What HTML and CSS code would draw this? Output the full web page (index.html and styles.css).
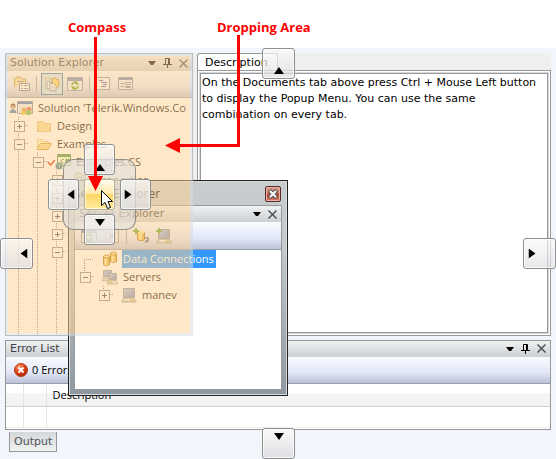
FILE: index.html
```html
<!DOCTYPE html>
<html lang="en">
<head>
<meta charset="utf-8">
<title>Docking</title>
<link rel="stylesheet" href="styles.css">
</head>
<body>
<svg class="defs" aria-hidden="true">
  <defs>
    <linearGradient id="gold" x1="0" x2="1"><stop offset="0" stop-color="#f3b52c"/><stop offset=".35" stop-color="#ffeaa0"/><stop offset="1" stop-color="#dc9410"/></linearGradient>
    <linearGradient id="screen" x1="0" y1="0" x2="1" y2="1"><stop offset="0" stop-color="#b4c6e4"/><stop offset="1" stop-color="#7587b8"/></linearGradient>
    <radialGradient id="red" cx=".35" cy=".25" r=".8"><stop offset="0" stop-color="#ff9a70"/><stop offset=".5" stop-color="#e04818"/><stop offset="1" stop-color="#a82408"/></radialGradient>
    <symbol id="drop" viewBox="0 0 8 4"><path d="M0 0h8L5 4H3z" fill="currentColor"/></symbol>
    <symbol id="pin" viewBox="0 0 9 10"><path d="M2.500 6V.5h4V6M5.500 1v5M0 6.500h9M4.500 7v3" fill="none" stroke="currentColor"/></symbol>
    <symbol id="close" viewBox="0 0 9 9"><path d="M.5.5l8 8M8.500.5l-8 8" fill="none" stroke="currentColor" stroke-width="1.400"/></symbol>
    <symbol id="folder" viewBox="0 0 16 16"><path d="M1.500 13.500v-10h5l1.500 2h6.500v8z" fill="#f6dc90" stroke="#b8902c" stroke-dasharray="1 1"/></symbol>
    <symbol id="folder-open" viewBox="0 0 16 16"><path d="M1.500 13V3.500h5l1.500 2h4.500V8" fill="#fff0b8" stroke="#b8902c" stroke-dasharray="1 1"/><path d="M1 13.500L4.500 7.500h11L12 13.500z" fill="#f6d987" stroke="#c49a36"/></symbol>
    <symbol id="db" viewBox="0 0 16 16"><path d="M8.500 2.500v8c0 1.500 6 1.500 6 0v-8z" fill="url(#gold)" stroke="#ad7610"/><ellipse cx="11.500" cy="2.500" rx="3" ry="1.500" fill="#ffe896" stroke="#ad7610"/><path d="M1.500 5.500v8c0 1.500 6 1.500 6 0v-8z" fill="url(#gold)" stroke="#ad7610"/><ellipse cx="4.500" cy="5.500" rx="3" ry="1.500" fill="#ffe896" stroke="#ad7610"/></symbol>
    <symbol id="pc" viewBox="0 0 16 16"><path d="M2.500 1.500h11v9h-11z" fill="url(#screen)" stroke="#8c93a0"/><path d="M3.500 11h9l2.500 2.500v1.500H1v-1.500z" fill="#d9d9d2" stroke="#85857c" stroke-width=".8"/><path d="M10 13.500h3" stroke="#d5a800" /><path d="M4 12.500h4" stroke="#fff"/></symbol>
    <symbol id="pcs" viewBox="0 0 16 16"><path d="M1.500 1.500h8v6h-8z" fill="url(#screen)" stroke="#8c93a0"/><path d="M1 9h6v3H0v-1z" fill="#d9d9d2" stroke="#85857c" stroke-width=".7"/><path d="M7.500 4.500h7v6h-7z" fill="url(#screen)" stroke="#8c93a0"/><path d="M7.500 11.500h7l1 2v1.500H5.500v-1.500z" fill="#e4e4da" stroke="#85857c" stroke-width=".7"/><path d="M7 13.500h3" stroke="#d5a800"/></symbol>
    <symbol id="refresh" viewBox="0 0 16 16"><path d="M.5 1.500h15v13H.5z" fill="#eef1f6" stroke="#8b96a8"/><path d="M1 2h14v3H1z" fill="#6f8cba"/><path d="M5 9a3 3 0 0 1 5-2M11 10a3 3 0 0 1-5 2" fill="none" stroke="#5a9c10" stroke-width="1.700"/><path d="M9 5l3.500 3.500H8zM7 14l-3.500-3.500H8z" fill="#5a9c10"/></symbol>
    <symbol id="props" viewBox="0 0 16 16"><path d="M.5 11V3h1l1-2h4l1 2h4v4" fill="#f7e0a0" stroke="#b79548"/><path d="M5.500 7.500h10v7h-10z" fill="#fff" stroke="#6f7c94"/><path d="M3 5.500h7M7 9.500h2m1 0h4M7 12.500h2m1 0h4" stroke="#7b879c"/></symbol>
    <symbol id="files" viewBox="0 0 18 18"><path d="M1.500 14V2.500h5V4H10" fill="none" stroke="#b8902c" stroke-dasharray="1 1"/><path d="M9.500 2.500h4l1 1.500h2v8h-7z" fill="#f8d46c" stroke="#b98b20"/><path d="M3.500 6.500h5v8h-5z" fill="#fff" stroke="#7785a0"/><path d="M6.500 8.500h4l3 3v5h-7z" fill="#fff" stroke="#6f7c94"/><path d="M8 11.500h2M8 13.500h4" stroke="#8c99b0"/></symbol>
    <symbol id="code" viewBox="0 0 16 16"><path d="M.5 1.500h13v12H.5z" fill="#f7f8fb" stroke="#8993a8"/><path d="M3 4.500h4M5 6.500h6M7 8.500h4M5 10.500h5" stroke="#5560b4"/></symbol>
    <symbol id="form" viewBox="0 0 16 16"><path d="M.5 1.500h14v12H.5z" fill="#eff1f6" stroke="#8390a6"/><path d="M1 2h13v2H1z" fill="#6f86b0"/><path d="M2.500 7.500H6M2.500 10.500H6M7.500 6.500h5v2h-5zM7.500 10.500h5v1h-5z" fill="#fff" stroke="#7d899e"/></symbol>
    <symbol id="solution" viewBox="0 0 16 16"><path d="M.5 1.500h15v12H.5z" fill="#e6eaf3" stroke="#7787a6"/><path d="M1 2h14v2H1z" fill="#4977bd"/><circle cx="7" cy="10" r="2.300" fill="#e88a2c"/><circle cx="6.500" cy="13" r="2.300" fill="#ecc423"/><circle cx="12" cy="9.500" r="2.500" fill="#d95648"/><circle cx="11.500" cy="12.500" r="2.800" fill="#7eb24c"/></symbol>
    <symbol id="user" viewBox="0 0 8 16"><circle cx="4" cy="6" r="2.500" fill="#5a412f"/><circle cx="4" cy="7" r="1.700" fill="#e7a777"/><path d="M.5 13c0-5 7-5 7 0z" fill="#4779ae"/></symbol>
    <symbol id="check" viewBox="0 0 8 16"><path d="M1 8l2.500 3L8 6" fill="none" stroke="#e02808" stroke-width="1.600"/></symbol>
    <symbol id="project" viewBox="0 0 16 16"><path d="M2.500.5h13v11h-13z" fill="#f8fff4" stroke="#4b8740"/><path d="M3 1h12v2H3z" fill="#469232"/><path d="M9 5.500a2 2 0 1 0 0 3.500M11.500 4.500v5M13.500 4.500v5M10 6h5M10 8h5" fill="none" stroke="#2f8c1e"/><circle cx="4" cy="12" r="3.500" fill="#407f96"/><path d="M2 10l3 1-1 3" stroke="#8cc29a" fill="none"/></symbol>
    <symbol id="plus" viewBox="0 0 6 6"><path d="M2 0h2v2h2v2H4v2H2V4H0V2h2z" fill="#6ca528"/></symbol>
    <symbol id="remove" viewBox="0 0 16 16"><path d="M1.500 1.500h13v13h-13z" fill="#eee" stroke="#999"/><path d="M5 5l6 6M11 5l-6 6" stroke="#888" stroke-width="1.500"/></symbol>
    <symbol id="arrow" viewBox="0 0 10 7"><path d="M5 0l5 7H0z" fill="#000"/></symbol>
  </defs>
</svg>

<main class="workspace">
  <div class="docks">
    <section class="panel solution">
      <header class="bar">
        <h2>Solution Explorer</h2>
        <button aria-label="Menu"><svg class="g-drop"><use href="#drop"/></svg></button>
        <button aria-label="Pin"><svg class="g-pin"><use href="#pin"/></svg></button>
        <button aria-label="Close"><svg class="g-close"><use href="#close"/></svg></button>
      </header>
      <div class="tools">
        <button aria-label="Properties"><svg><use href="#props"/></svg></button>
        <i class="sep"></i>
        <button class="pressed" aria-label="Show all files"><svg><use href="#files"/></svg></button>
        <button aria-label="Refresh"><svg><use href="#refresh"/></svg></button>
        <i class="sep"></i>
        <button aria-label="View code"><svg><use href="#code"/></svg></button>
        <button aria-label="View designer"><svg><use href="#form"/></svg></button>
      </div>
      <ul class="tree">
        <li><svg class="badge"><use href="#user"/></svg><svg class="icon"><use href="#solution"/></svg><span class="label">Solution 'Telerik.Windows.Co</span></li>
        <li><i class="guide node plus"></i><i class="badge"></i><svg class="icon"><use href="#folder"/></svg><span class="label">Design</span></li>
        <li><i class="guide node"></i><i class="badge"></i><svg class="icon"><use href="#folder-open"/></svg><span class="label">Examples</span></li>
        <li><i class="guide"></i><i class="guide node"></i><svg class="badge"><use href="#check"/></svg><svg class="icon"><use href="#project"/></svg><span class="label">Examples.CS</span></li>
        <li><i class="guide"></i><i class="guide"></i><i class="guide node plus"></i><i class="badge"></i><svg class="icon"><use href="#props"/></svg><span class="label">Properties</span></li>
        <li><i class="guide"></i><i class="guide"></i><i class="guide node plus"></i></li>
        <li><i class="guide"></i><i class="guide"></i><i class="guide node plus"></i></li>
        <li><i class="guide"></i><i class="guide"></i><i class="guide node plus"></i></li>
        <li><i class="guide"></i><i class="guide"></i><i class="guide node"></i></li>
        <li class="rest"><i class="guide"></i><i class="guide"></i><i class="guide"></i></li>
      </ul>
    </section>

    <section class="documents">
      <div class="tabs"><button class="tab">Description</button></div>
      <div class="frame"><p class="document">On the Documents tab above press Ctrl + Mouse Left button to display the Popup Menu. You can use the same combination on every tab.</p></div>
    </section>
  </div>

  <section class="panel errors">
    <header class="bar">
      <h2>Error List</h2>
      <button aria-label="Menu"><svg class="g-drop"><use href="#drop"/></svg></button>
      <button aria-label="Pin"><svg class="g-pin"><use href="#pin"/></svg></button>
      <button aria-label="Close"><svg class="g-close"><use href="#close"/></svg></button>
    </header>
    <div class="tools">
      <button class="count"><svg viewBox="0 0 14 14"><circle cx="7" cy="7" r="6.500" fill="url(#red)" stroke="#b43a1c"/><path d="M4.500 4.500l5 5M9.500 4.500l-5 5" stroke="#fff" stroke-width="2"/></svg>0 Errors</button>
    </div>
    <table>
      <thead><tr><th class="c1"></th><th class="c2"></th><th>Description</th></tr></thead>
      <tbody><tr><td></td><td></td><td></td></tr></tbody>
    </table>
  </section>
  <button class="output">Output</button>
</main>

<section class="window">
  <header class="caption"><h2>Server Explorer</h2><button aria-label="Close window"><svg viewBox="0 0 14 14"><path d="M3.500 3.500l7 7M10.500 3.500l-7 7" stroke="#555" stroke-width="4"/><path d="M4 4l6 6M10 4l-6 6" stroke="#fff" stroke-width="2"/></svg></button></header>
  <div class="panel body">
    <header class="bar">
      <h2>Server Explorer</h2>
      <button aria-label="Menu"><svg class="g-drop"><use href="#drop"/></svg></button>
      <button aria-label="Close"><svg class="g-close"><use href="#close"/></svg></button>
    </header>
    <div class="tools">
      <button aria-label="Refresh"><svg><use href="#refresh"/></svg></button>
      <button aria-label="Stop"><svg><use href="#remove"/></svg></button>
      <i class="sep"></i>
      <button aria-label="Connect to database"><svg viewBox="0 0 16 16"><path d="M4.500 4v7c0 2 7 2 7 0V4z" fill="url(#gold)" stroke="#ad7610"/><ellipse cx="8" cy="4" rx="3.500" ry="1.500" fill="#ffe896"/><path d="M11 10h4v3h-2v2" fill="none" stroke="#666" stroke-width="1.500"/><use href="#plus" width="6" height="6"/></svg></button>
      <button aria-label="Connect to server"><svg viewBox="0 0 16 16"><use href="#pc" width="16" height="16"/><use href="#plus" width="6" height="6"/></svg></button>
    </div>
    <ul class="tree">
      <li><i class="guide leaf"></i><i class="badge"></i><svg class="icon"><use href="#db"/></svg><span class="label selected">Data Connections</span></li>
      <li><i class="guide node last"></i><i class="badge"></i><svg class="icon"><use href="#pcs"/></svg><span class="label">Servers</span></li>
      <li><i class="guide empty"></i><i class="guide node plus last"></i><i class="badge"></i><svg class="icon"><use href="#pc"/></svg><span class="label">manev</span></li>
    </ul>
  </div>
</section>

<div class="drop-area"></div>

<button class="dock edge-top" aria-label="Dock top"><svg><use href="#arrow"/></svg></button>
<button class="dock edge-left" aria-label="Dock left"><svg><use href="#arrow"/></svg></button>
<button class="dock edge-right" aria-label="Dock right"><svg><use href="#arrow"/></svg></button>
<button class="dock edge-bottom" aria-label="Dock bottom"><svg><use href="#arrow"/></svg></button>

<div class="compass">
  <button class="dock up" aria-label="Dock above"><svg><use href="#arrow"/></svg></button>
  <button class="dock left" aria-label="Dock to the left"><svg><use href="#arrow"/></svg></button>
  <button class="dock center" aria-label="Dock inside"></button>
  <button class="dock right" aria-label="Dock to the right"><svg><use href="#arrow"/></svg></button>
  <button class="dock down" aria-label="Dock below"><svg><use href="#arrow"/></svg></button>
</div>

<svg class="callouts" viewBox="0 0 556 459" aria-hidden="true">
  <path d="M95.500 37v141M238.500 35v110.500H178" fill="none" stroke="#f00" stroke-width="3"/>
  <path d="M88 176h15l-7.500 15zM180 138v15l-15-7.500z" fill="#f00"/>
  <path d="M101.500 190.500v15l3.500-3 2.500 6 3-1-2.500-6h4.500z" fill="#fff" stroke="#000"/>
</svg>
<strong class="note compass-note">Compass</strong>
<strong class="note area-note">Dropping Area</strong>
</body>
</html>
```
FILE: styles.css
```css
* { box-sizing: border-box; }
body {
  margin: 0;
  min-height: 100vh;
  padding-top: 48px;
  display: flex;
  flex-direction: column;
  position: relative;
  overflow: hidden;
  background: #fff;
  font: 11px/18px "Open Sans", "Noto Sans", sans-serif;
  color: #000;
}
h2, p, ul { margin: 0; padding: 0; font: inherit; }
button { margin: 0; padding: 0; border: 0; background: none; font: inherit; color: inherit; }
svg { display: block; flex: none; }
.defs { position: absolute; width: 0; height: 0; }

.workspace { flex: 1; display: flex; flex-direction: column; padding: 5px 5px 7px; background: #f2f5fb; }
.docks { flex: 1; display: grid; grid-template-columns: 188px 1fr; gap: 4px; margin-bottom: 4px; background: #efefef; }

.panel { display: flex; flex-direction: column; min-width: 0; border: 1px solid #999; background: #fff; }
.bar { display: flex; align-items: center; gap: 7px; height: 16px; padding: 0 4px; background: linear-gradient(#f0f1f2, #cbcfd3); font: 11px/16px "DejaVu Sans", sans-serif; color: #3c4248; }
.bar h2 { flex: 1; white-space: nowrap; }
.bar button { color: #000; }
.g-drop { width: 8px; height: 4px; }
.g-pin { width: 9px; height: 10px; }
.g-close { width: 9px; height: 9px; color: #444c54; }
.tools { display: flex; align-items: center; gap: 3px; height: 27px; padding: 0 3px; border-bottom: 1px solid #999fa9; background: linear-gradient(#fafbff, #e2e7f8 60%, #bcc3d6); }
.tools button { padding: 2px; }
.tools svg { width: 16px; height: 16px; }
.sep { width: 1px; height: 16px; margin: 0 1px; background: #9aa0aa; }
.solution { overflow: hidden; }
.solution .bar { height: 17px; padding-top: 1px; }
.solution .tools { padding-left: 6px; gap: 2px; }
.solution .sep { margin: 0 2px; }
.tools .pressed { border: 1px solid #3c7fb1; background: #cfe2f0; }

.tree { flex: 1; display: flex; flex-direction: column; list-style: none; }
.tree li { display: flex; align-items: center; height: 18px; white-space: nowrap; }
.tree .rest { flex: 1; align-items: stretch; height: auto; }
.solution .tree { padding: 1px 0 0 3px; overflow: hidden; }
.badge { width: 8px; height: 16px; flex: none; }
.icon { width: 16px; height: 16px; margin-right: 4px; }
.label { padding: 0 1px; }
.selected { padding-right: 2px; background: #39f; color: #fff; }
.guide {
  --dots: repeating-linear-gradient(#777 0 1px, transparent 1px 2px);
  --dash: repeating-linear-gradient(90deg, #777 0 1px, transparent 1px 2px);
  position: relative;
  flex: none;
  align-self: stretch;
  width: 19px;
  background: var(--dots) 9px 0 / 1px 100% no-repeat;
}
.guide.node { background: var(--dots) 9px 0 / 1px 100% no-repeat, var(--dash) 14px 8px / 6px 1px no-repeat; }
.guide.node.last { background: var(--dots) 9px 0 / 1px 50% no-repeat, var(--dash) 14px 8px / 6px 1px no-repeat; }
.guide.leaf { background: var(--dots) 9px 9px / 1px 9px no-repeat, var(--dash) 9px 9px / 10px 1px no-repeat; }
.guide.empty { background: none; }
.node::before {
  content: "";
  position: absolute;
  left: 5px;
  top: 4px;
  width: 9px;
  height: 9px;
  border: 1px solid #888;
  background: linear-gradient(#345, #345) center / 5px 1px no-repeat, #fff;
}
.plus::before { background: linear-gradient(#345, #345) center / 5px 1px no-repeat, linear-gradient(#345, #345) center / 1px 5px no-repeat, #fff; }

.documents { display: flex; flex-direction: column; min-width: 0; font: 11px/16px "DejaVu Sans", sans-serif; }
.tab { display: block; height: 17px; padding: 2px 9px 0 7px; border: 1px solid #999; border-bottom: 0; border-radius: 3px 3px 0 0; background: #fff; line-height: 14px; }
.frame { flex: 1; display: flex; padding: 2px; border: 1px solid #999; background: #d5d9dd; box-shadow: inset 0 0 0 1px #fff; }
.document { flex: 1; padding: 1px 1px 0; border: 1px solid #999; background: #fff; }

.count { display: flex; align-items: center; gap: 4px; }
.errors .tools { padding-left: 6px; }
.errors .count svg { width: 14px; height: 14px; }
table { width: 100%; border-collapse: collapse; table-layout: fixed; }
th { height: 23px; padding: 0 6px; border-bottom: 1px solid #d0d0d0; background: linear-gradient(#fff 40%, #f5f5f6 40%, #f1f1f3); font-weight: 400; text-align: left; }
td { height: 21px; border-bottom: 1px solid #eee; }
.errors table { margin-bottom: 1px; }
th.c1, th.c2, td:nth-child(-n+2) { border-right: 1px solid #e4e4e6; }
.c1 { width: 17px; }
.c2 { width: 23px; }
.output { align-self: flex-start; margin: 2px 0 0 4px; height: 20px; padding: 0 4px; border: 1px solid #999; border-top: 0; background: linear-gradient(#d5d8db, #f0f1f2); font: 11px/18px "DejaVu Sans", sans-serif; color: #4c5258; }

.window { position: absolute; left: 68px; top: 180px; width: 220px; padding: 1px 5px 5px; border: 1px solid #222; background: linear-gradient(#c8cdcf, #c3c9cc 30%, #8f98a0); box-shadow: inset 0 0 0 1px #d8dcde; }
.caption { display: flex; justify-content: space-between; align-items: center; height: 23px; font-size: 12px; }
.caption button { margin-right: 1px; border: 1px solid #5b2b26; border-radius: 2px; background: linear-gradient(#e0a498, #c4604c 50%, #b44430 51%, #d08070); box-shadow: inset 0 0 0 1px #e5b2a6; }
.caption svg { width: 14px; height: 14px; }
.body { min-height: 185px; }
.body .tools { height: 28px; padding-left: 4px; }

.drop-area { position: absolute; left: 5px; top: 53px; width: 188px; height: 283px; border: 3px solid rgba(218, 218, 218, .55); background: rgba(255, 209, 145, .5) padding-box; }

.dock { position: absolute; display: grid; place-items: center; width: 31px; height: 31px; border: 1px solid #8d8f91; border-radius: 3px; background: linear-gradient(rgba(250, 250, 250, .7), rgba(222, 223, 226, .7)); box-shadow: inset 0 0 0 1px rgba(255, 255, 255, .7); }
.dock svg { width: 10px; height: 7px; }
.edge-top, .edge-bottom { left: 262px; width: 33px; }
.edge-top { top: 48px; padding-top: 14px; }
.edge-bottom { bottom: 0; padding-bottom: 15px; background: linear-gradient(#fafafa, #dedfe2); }
.edge-left, .edge-right { top: 238px; width: 33px; }
.edge-left { left: 0; padding-left: 15px; }
.edge-right { right: 0; padding-right: 15px; }
.edge-bottom svg, .down svg { transform: rotate(180deg); }
.edge-left svg, .left svg { transform: rotate(-90deg); }
.edge-right svg, .right svg { transform: rotate(90deg); }

.compass { position: absolute; left: 48px; top: 144px; width: 103px; height: 101px; }
.compass::before { content: ""; position: absolute; inset: 15px; border: 1px solid rgba(110, 110, 110, .7); border-radius: 10px; background: rgba(225, 223, 220, .6); }
.up, .down, .center { left: 36px; }
.left, .center, .right { top: 35px; }
.up { top: 0; padding-top: 15px; }
.down { bottom: 0; padding-bottom: 15px; }
.left { left: 0; padding-left: 15px; }
.right { right: 0; padding-right: 15px; }
.center { border-color: #b9ad8c; background: linear-gradient(#fffdf0, #ffe9a8 48%, #ffd666 50%, #ffec9e); }

.callouts { position: absolute; left: 0; top: 0; width: 556px; height: 459px; pointer-events: none; }
.note { position: absolute; top: 18px; font: 700 13px/18px "Open Sans", sans-serif; color: #f00; white-space: nowrap; }
.compass-note { left: 68px; }
.area-note { left: 217px; }
```
